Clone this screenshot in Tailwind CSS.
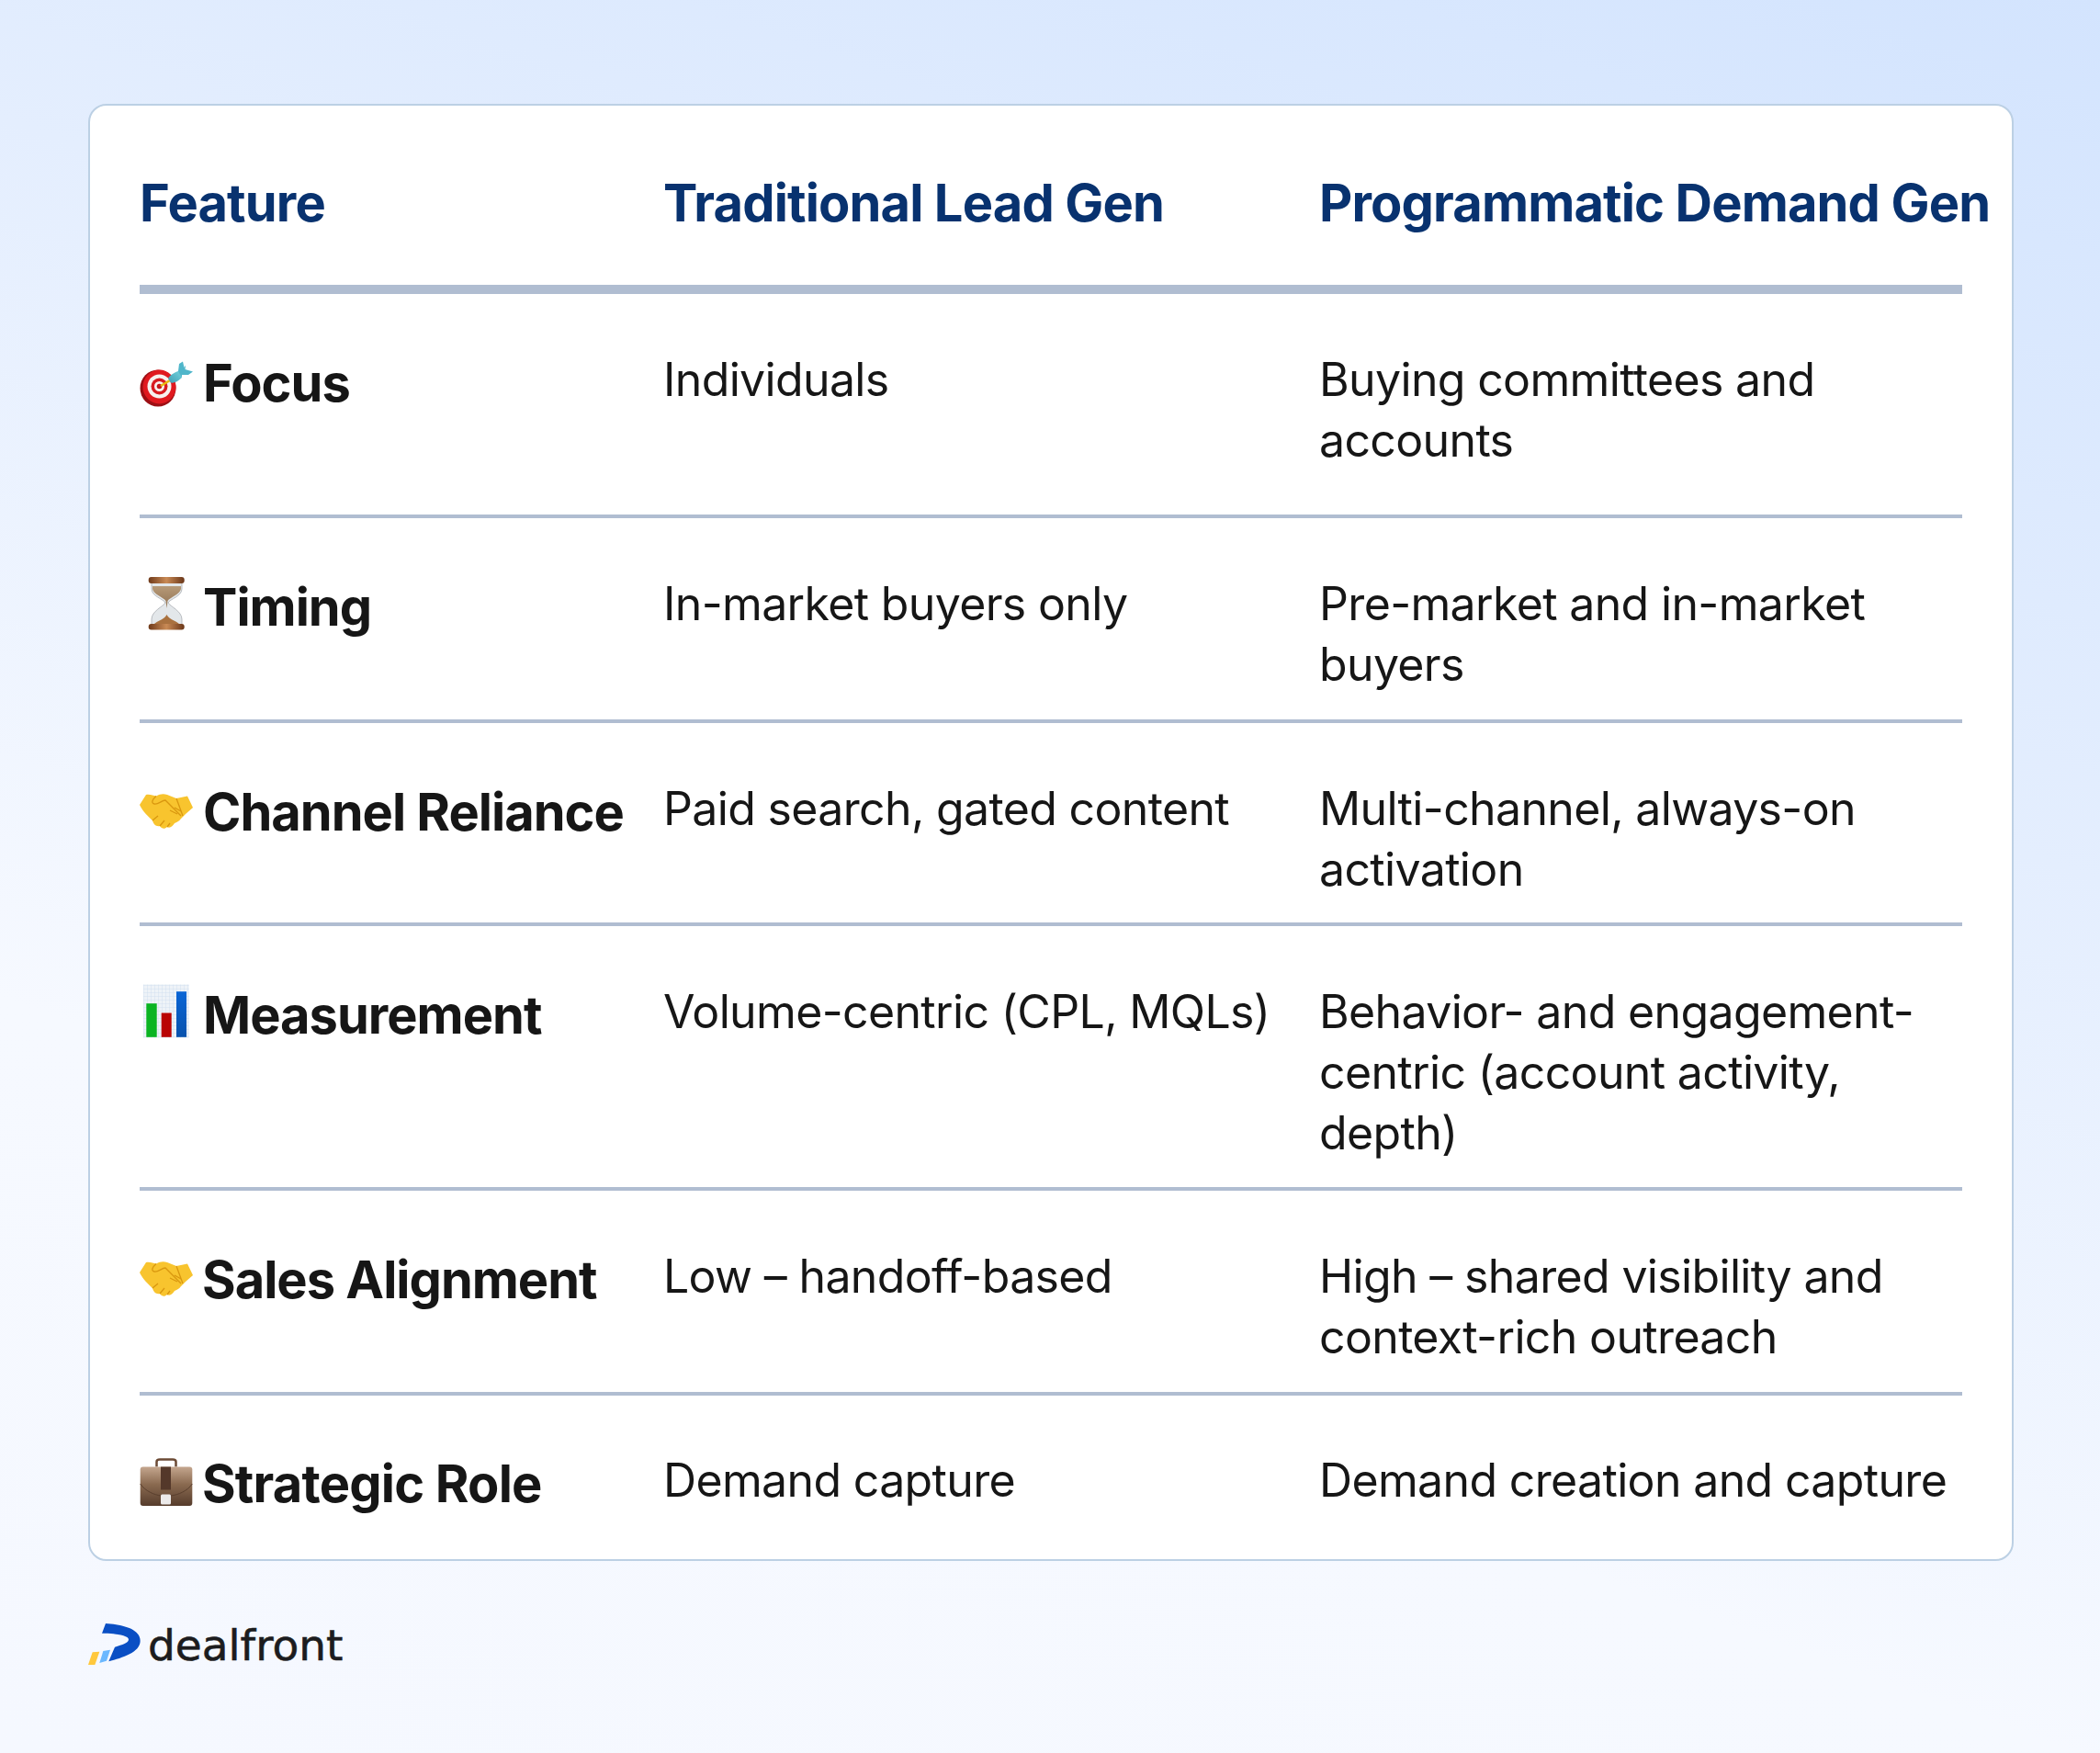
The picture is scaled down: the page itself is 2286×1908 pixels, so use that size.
<!DOCTYPE html>
<html lang="en">
<head>
  <meta charset="UTF-8" />
  <title>Lead gen vs demand gen</title>
  <script src="https://cdn.jsdelivr.net/npm/@tailwindcss/browser@4"></script>
</head>
<body class="w-[2286px] h-[1908px] overflow-hidden bg-[linear-gradient(200deg,#d3e4fe_0%,#e4eefe_35%,#f6f9ff_70%,#f5f8ff_100%)] font-['Inter',sans-serif] text-[#161616]">
  <main class="pt-[113px] pl-[96px]">
    <!-- Table card -->
    <section class="w-[2096px] h-[1586px] bg-white border-2 border-[#bcd0e4] rounded-[20px] pl-[54px] pr-[54px]">
      <!-- Header -->
      <div class="grid grid-cols-[570px_714px_700px] h-[205px] border-b-[10px] border-[#b0bdd1] pt-[72px] text-[56px] leading-[68px] font-bold tracking-[-0.85px] text-[#08326f] whitespace-nowrap">
        <div>Feature</div>
        <div>Traditional Lead Gen</div>
        <div>Programmatic Demand Gen</div>
      </div>

      <!-- Focus -->
      <div class="grid grid-cols-[570px_714px_700px] h-[244px] border-b-4 border-[#b0bdd1] pt-[60px] text-[50px] leading-[66px] tracking-[-0.65px]">
        <div class="flex items-center h-[68px] mt-[3px] gap-[11px] text-[56px] font-bold tracking-[-1px]">
          <svg class="shrink-0 overflow-visible" width="58" height="58" viewBox="0 0 58 58">
            <defs>
              <linearGradient id="dart" x1="0" y1="1" x2="1" y2="0"><stop offset="0" stop-color="#3f9fb3"/><stop offset="1" stop-color="#74d2dd"/></linearGradient>
            </defs>
            <ellipse cx="20" cy="34.500" rx="19.500" ry="20" fill="#9c0f14"/>
            <ellipse cx="21.500" cy="33" rx="18" ry="18.500" fill="#e0191f"/>
            <circle cx="21.500" cy="32.500" r="13" fill="#f7f1ef"/>
            <circle cx="21.500" cy="32.500" r="9" fill="#d81b20"/>
            <circle cx="21.500" cy="32.500" r="5.500" fill="#f7f1ef"/>
            <circle cx="21.500" cy="32.500" r="2.800" fill="#c5161b"/>
            <path d="M23 32 L33 26" stroke="#e8b90f" stroke-width="2.600"/>
            <path d="M31 24 C33 20 38 17.500 43 15.500 L46 23 C42 27 37 29.500 34 28.500 Z" fill="url(#dart)"/>
            <path d="M42 16 L43 8 L47 5.500 L48.500 12 L50 9.500 L49.500 14 L58 16.500 L53 20 L46 20 L46 23 Z" fill="#4fb6ca"/>
          </svg>
          <span>Focus</span>
        </div>
        <div>Individuals</div>
        <div>Buying committees and<br />accounts</div>
      </div>

      <!-- Timing -->
      <div class="grid grid-cols-[570px_714px_700px] h-[223px] border-b-4 border-[#b0bdd1] pt-[60px] text-[50px] leading-[66px] tracking-[-0.65px]">
        <div class="flex items-center h-[68px] mt-[3px] gap-[11px] text-[56px] font-bold tracking-[-1px]">
          <svg class="shrink-0 overflow-visible" width="58" height="58" viewBox="0 0 58 58">
            <defs>
              <linearGradient id="wood" x1="0" y1="0" x2="1" y2="0"><stop offset="0" stop-color="#6f3a1a"/><stop offset="0.5" stop-color="#c98a55"/><stop offset="1" stop-color="#6a3618"/></linearGradient>
              <linearGradient id="sand" x1="0" y1="0" x2="0" y2="1"><stop offset="0" stop-color="#b79a78"/><stop offset="1" stop-color="#8f7152"/></linearGradient>
            </defs>
            <path d="M13 1 H46 V9 C46 17 33 20 31 24 C33 28 46 33 46 42 V50 H13 V42 C13 33 26 28 28 24 C26 20 13 17 13 9 Z" fill="#e3e7ea" stroke="#a9adb2" stroke-width="0.800"/>
            <path d="M14 6 H45 V9 C44 15 33 18 30.500 22 L29.500 30 L28.500 22 C26 18 15 15 14 9 Z" fill="url(#sand)"/>
            <path d="M29.500 37 C32 43 43 44 45 50 H14 C16 44 27 43 29.500 37 Z" fill="#a9713f"/>
            <rect x="9.700" y="-4" width="39" height="7" rx="3" fill="url(#wood)"/>
            <rect x="9.700" y="47" width="39" height="6.500" rx="3" fill="url(#wood)"/>
          </svg>
          <span>Timing</span>
        </div>
        <div>In-market buyers only</div>
        <div>Pre-market and in-market<br />buyers</div>
      </div>

      <!-- Channel Reliance -->
      <div class="grid grid-cols-[570px_714px_700px] h-[221px] border-b-4 border-[#b0bdd1] pt-[60px] text-[50px] leading-[66px] tracking-[-0.65px]">
        <div class="flex items-center h-[68px] mt-[3px] gap-[11px] text-[56px] font-bold tracking-[-1px] whitespace-nowrap">
          <svg class="shrink-0 overflow-visible" width="58" height="58" viewBox="0 0 58 58">
            <path d="M0 21 L7 10 C11 9 15 11 18 11.500 C22 9 26 8.500 30 10 L40 14 L52 11.500 L58 24 L50 31 L45 36 C43 39 40 40 38 41 C36 44 33 47 30 45 C27 48 24 47 22 44 C18 45 15 42 14 38 C10 34 3 28 0 21 Z" fill="#f8c42e"/>
            <path d="M18 11.500 C14 15 12 19 16 20 C20 21 24 16 28 16 L45 33 M40 14 L47 33 M38 24 L45 28 M33 27 L41 31 M14 38 L20 33 M22 44 L27 38 M30 45 L33 41" stroke="#d9970f" stroke-width="1.300" fill="none"/>
          </svg>
          <span>Channel Reliance</span>
        </div>
        <div>Paid search, gated content</div>
        <div>Multi-channel, always-on<br />activation</div>
      </div>

      <!-- Measurement -->
      <div class="grid grid-cols-[570px_714px_700px] h-[288px] border-b-4 border-[#b0bdd1] pt-[60px] text-[50px] leading-[66px] tracking-[-0.65px]">
        <div class="flex items-center h-[68px] mt-[3px] gap-[11px] text-[56px] font-bold tracking-[-1px]">
          <svg class="shrink-0 overflow-visible" width="58" height="58" viewBox="0 0 58 58">
            <defs>
              <pattern id="chartgrid" width="4" height="4" patternUnits="userSpaceOnUse"><path d="M4 0 H0 V4" fill="none" stroke="#c9daee" stroke-width="0.700"/></pattern>
              <linearGradient id="blue" x1="0" y1="0" x2="0" y2="1"><stop offset="0" stop-color="#0a66d6"/><stop offset="1" stop-color="#0852ad"/></linearGradient>
            </defs>
            <rect x="4" y="-4.500" width="49.700" height="58" fill="#eef3f8"/>
            <rect x="4" y="-4.500" width="49.700" height="58" fill="url(#chartgrid)"/>
            <rect x="7.300" y="16.200" width="11.400" height="36.600" fill="#0ab422"/>
            <rect x="23.700" y="26.500" width="11" height="26.300" fill="#b90404"/>
            <rect x="40" y="3.200" width="11" height="49.600" fill="url(#blue)"/>
          </svg>
          <span>Measurement</span>
        </div>
        <div>Volume-centric (CPL, MQLs)</div>
        <div>Behavior- and engagement-<br />centric (account activity,<br />depth)</div>
      </div>

      <!-- Sales Alignment -->
      <div class="grid grid-cols-[570px_714px_700px] h-[223px] border-b-4 border-[#b0bdd1] pt-[60px] text-[50px] leading-[66px] tracking-[-0.65px]">
        <div class="flex items-center h-[68px] mt-[3px] gap-[10px] text-[56px] font-bold tracking-[-1px] whitespace-nowrap">
          <svg class="shrink-0 overflow-visible" width="58" height="58" viewBox="0 0 58 58">
            <path d="M0 21 L7 10 C11 9 15 11 18 11.500 C22 9 26 8.500 30 10 L40 14 L52 11.500 L58 24 L50 31 L45 36 C43 39 40 40 38 41 C36 44 33 47 30 45 C27 48 24 47 22 44 C18 45 15 42 14 38 C10 34 3 28 0 21 Z" fill="#f8c42e"/>
            <path d="M18 11.500 C14 15 12 19 16 20 C20 21 24 16 28 16 L45 33 M40 14 L47 33 M38 24 L45 28 M33 27 L41 31 M14 38 L20 33 M22 44 L27 38 M30 45 L33 41" stroke="#d9970f" stroke-width="1.300" fill="none"/>
          </svg>
          <span>Sales Alignment</span>
        </div>
        <div>Low – handoff-based</div>
        <div>High – shared visibility and<br />context-rich outreach</div>
      </div>

      <!-- Strategic Role -->
      <div class="grid grid-cols-[570px_714px_700px] pt-[59px] text-[50px] leading-[66px] tracking-[-0.65px]">
        <div class="flex items-center h-[68px] mt-[3px] gap-[10px] text-[56px] font-bold tracking-[-0.8px] whitespace-nowrap">
          <svg class="shrink-0 overflow-visible" width="58" height="58" viewBox="0 0 58 58">
            <defs>
              <linearGradient id="bag" x1="0" y1="0" x2="0" y2="1"><stop offset="0" stop-color="#c4a68e"/><stop offset="0.45" stop-color="#8a6a50"/><stop offset="1" stop-color="#563c2c"/></linearGradient>
            </defs>
            <path d="M18.500 10.500 V5 C18.500 3 20 2.500 22 2.500 H36 C38 2.500 39.500 3 39.500 5 V10.500" fill="none" stroke="#6b4a35" stroke-width="2.500"/>
            <rect x="0.700" y="10.500" width="56.600" height="42.500" rx="3" fill="url(#bag)"/>
            <path d="M0.700 29 C6 37 16 41 23 42 H34 C42 41 52 37 57.300 29" fill="none" stroke="#5a3f2e" stroke-width="1"/>
            <rect x="23" y="10.500" width="11" height="25" fill="#54382a"/>
            <rect x="23" y="40.500" width="11" height="11" rx="1.500" fill="#eceaea"/>
          </svg>
          <span>Strategic Role</span>
        </div>
        <div>Demand capture</div>
        <div>Demand creation and capture</div>
      </div>
    </section>

    <!-- Logo -->
    <div class="flex items-center mt-[64px] gap-[7px]">
      <svg class="shrink-0" width="58" height="48" viewBox="48 78 174 144">
        <path d="M105 78 C160 82 218 95 218 135 C218 172 160 190 115 202 L135 155 C160 148 180 142 180 130 C180 118 140 110 93 110 Z" fill="#0a4fc4"/>
        <path d="M97 168 L120 164 L108 200 L85 207 Z" fill="#6bb8ff"/>
        <path d="M62 172 L85 170 L70 213 L48 213 Z" fill="#ffc83d"/>
      </svg>
      <span class="text-[47px] leading-[56px] text-[#1c1c1e] font-['DejaVu_Sans',sans-serif] [-webkit-text-stroke:0.6px_#1c1c1e]">dealfront</span>
    </div>
  </main>
</body>
</html>
